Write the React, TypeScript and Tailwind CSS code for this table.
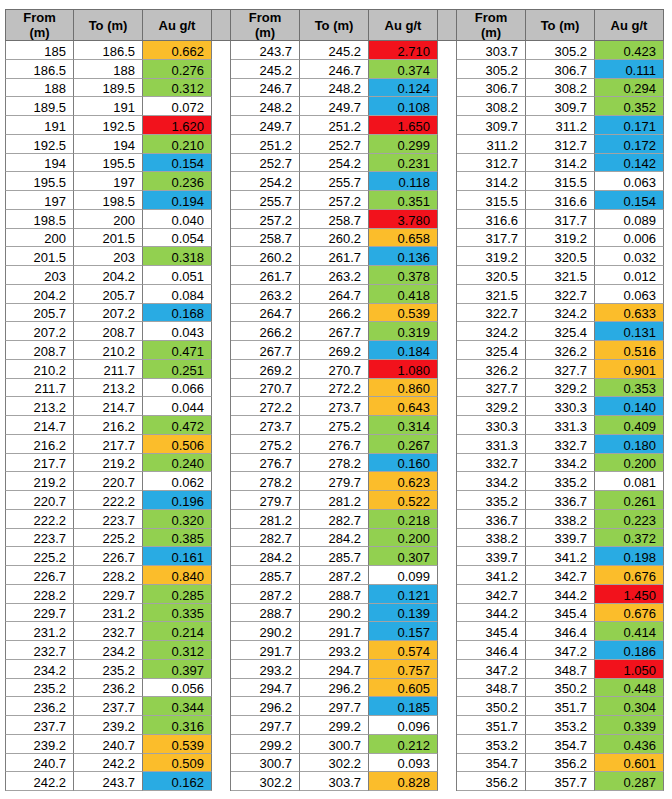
const T1 = `185 186.5 0.662
186.5 188 0.276
188 189.5 0.312
189.5 191 0.072
191 192.5 1.620
192.5 194 0.210
194 195.5 0.154
195.5 197 0.236
197 198.5 0.194
198.5 200 0.040
200 201.5 0.054
201.5 203 0.318
203 204.2 0.051
204.2 205.7 0.084
205.7 207.2 0.168
207.2 208.7 0.043
208.7 210.2 0.471
210.2 211.7 0.251
211.7 213.2 0.066
213.2 214.7 0.044
214.7 216.2 0.472
216.2 217.7 0.506
217.7 219.2 0.240
219.2 220.7 0.062
220.7 222.2 0.196
222.2 223.7 0.320
223.7 225.2 0.385
225.2 226.7 0.161
226.7 228.2 0.840
228.2 229.7 0.285
229.7 231.2 0.335
231.2 232.7 0.214
232.7 234.2 0.312
234.2 235.2 0.397
235.2 236.2 0.056
236.2 237.7 0.344
237.7 239.2 0.316
239.2 240.7 0.539
240.7 242.2 0.509
242.2 243.7 0.162`;

const T2 = `243.7 245.2 2.710
245.2 246.7 0.374
246.7 248.2 0.124
248.2 249.7 0.108
249.7 251.2 1.650
251.2 252.7 0.299
252.7 254.2 0.231
254.2 255.7 0.118
255.7 257.2 0.351
257.2 258.7 3.780
258.7 260.2 0.658
260.2 261.7 0.136
261.7 263.2 0.378
263.2 264.7 0.418
264.7 266.2 0.539
266.2 267.7 0.319
267.7 269.2 0.184
269.2 270.7 1.080
270.7 272.2 0.860
272.2 273.7 0.643
273.7 275.2 0.314
275.2 276.7 0.267
276.7 278.2 0.160
278.2 279.7 0.623
279.7 281.2 0.522
281.2 282.7 0.218
282.7 284.2 0.200
284.2 285.7 0.307
285.7 287.2 0.099
287.2 288.7 0.121
288.7 290.2 0.139
290.2 291.7 0.157
291.7 293.2 0.574
293.2 294.7 0.757
294.7 296.2 0.605
296.2 297.7 0.185
297.7 299.2 0.096
299.2 300.7 0.212
300.7 302.2 0.093
302.2 303.7 0.828`;

const T3 = `303.7 305.2 0.423
305.2 306.7 0.111
306.7 308.2 0.294
308.2 309.7 0.352
309.7 311.2 0.171
311.2 312.7 0.172
312.7 314.2 0.142
314.2 315.5 0.063
315.5 316.6 0.154
316.6 317.7 0.089
317.7 319.2 0.006
319.2 320.5 0.032
320.5 321.5 0.012
321.5 322.7 0.063
322.7 324.2 0.633
324.2 325.4 0.131
325.4 326.2 0.516
326.2 327.7 0.901
327.7 329.2 0.353
329.2 330.3 0.140
330.3 331.3 0.409
331.3 332.7 0.180
332.7 334.2 0.200
334.2 335.2 0.081
335.2 336.7 0.261
336.7 338.2 0.223
338.2 339.7 0.372
339.7 341.2 0.198
341.2 342.7 0.676
342.7 344.2 1.450
344.2 345.4 0.676
345.4 346.4 0.414
346.4 347.2 0.186
347.2 348.7 1.050
348.7 350.2 0.448
350.2 351.7 0.304
351.7 353.2 0.339
353.2 354.7 0.436
354.7 356.2 0.601
356.2 357.7 0.287`;

const parse = (s: string) => s.split("\n").map((l) => l.trim().split(" "));
const TABLES = [parse(T1), parse(T2), parse(T3)];

// grade bands, same as the sheet's conditional fill
function tone(v: string) {
  const n = parseFloat(v);
  if (n >= 1) return "bg-[#f2121c]";
  if (n >= 0.5) return "bg-[#fbbd2b]";
  if (n >= 0.2) return "bg-[#92d050]";
  if (n >= 0.1) return "bg-[#29abe3]";
  return "bg-white";
}

function HeadCell({ children, first }: { children: React.ReactNode; first?: boolean }) {
  return (
    <div
      className={`flex w-[69px] shrink-0 items-center justify-center border-r border-[#6f6f6f] text-center font-bold leading-[15px] ${
        first ? "border-l" : ""
      }`}
    >
      {children}
    </div>
  );
}

function Spacer({ head }: { head?: boolean }) {
  return <div className={`w-[19px] shrink-0 border-r ${head ? "border-[#6f6f6f]" : "border-[#7d7d7d]"}`} />;
}

function Cell({ value, fill, first }: { value: string; fill?: string; first?: boolean }) {
  return (
    <div
      className={`flex w-[69px] shrink-0 items-end justify-end border-r border-b border-r-[#7d7d7d] border-b-[#a3a3a3] pr-[7px] leading-[15px] ${
        fill ?? "bg-white"
      } ${first ? "border-l border-l-[#7d7d7d]" : ""}`}
    >
      {value}
    </div>
  );
}

export default function App() {
  const rows = TABLES[0].map((_, i) => TABLES.map((t) => t[i]));
  return (
    <div className="min-h-screen bg-white pt-[9px] pl-[5px] font-['Liberation_Sans',Arial,sans-serif] text-[13px] text-black">
      <div className="flex h-[32px] w-max border-y border-[#6f6f6f] bg-[#c0c0c0]">
        {[0, 1, 2].map((t) => (
          <div key={t} className="flex">
            <HeadCell first={t === 0}>
              From
              <br />
              (m)
            </HeadCell>
            <HeadCell>To (m)</HeadCell>
            <HeadCell>Au g/t</HeadCell>
            {t < 2 && <Spacer head />}
          </div>
        ))}
      </div>
      <div className="flex flex-col">
        {rows.map((row, i) => (
          <div key={i} className="flex h-[18.75px]">
            {row.map(([from, to, au], t) => (
              <div key={t} className="flex">
                <Cell value={from} first={t === 0} />
                <Cell value={to} />
                <Cell value={au} fill={tone(au)} />
                {t < 2 && <Spacer />}
              </div>
            ))}
          </div>
        ))}
      </div>
    </div>
  );
}
